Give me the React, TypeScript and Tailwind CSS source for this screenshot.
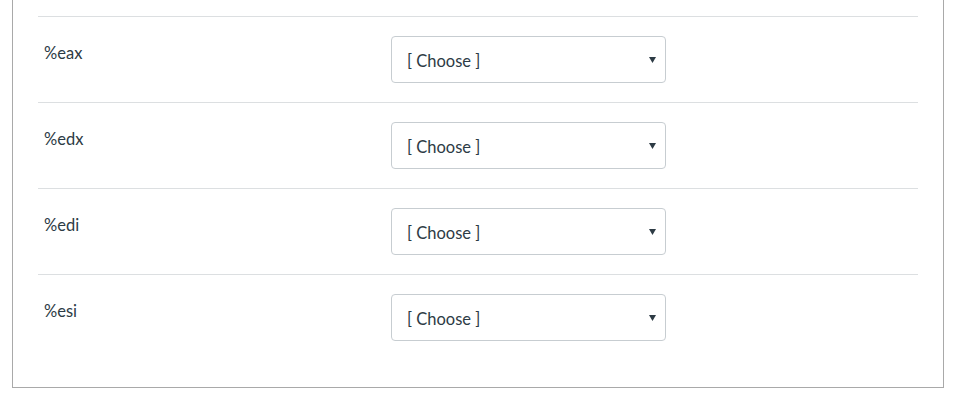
const registers = ["%eax", "%edx", "%edi", "%esi"]

function ChooseSelect() {
  return (
    <div className="w-[275px] h-[47px] rounded-[4px] border border-[#c7cdd1] bg-white flex items-center pl-[15px] pr-[9px]">
      <span className="flex-1 pt-[3px] text-[16.5px] text-[#2d3b45]">[ Choose ]</span>
      <svg width="7" height="6" viewBox="0 0 7 6" className="text-[#2d3b45]">
        <path d="M0 0h7L3.5 6z" fill="currentColor" />
      </svg>
    </div>
  )
}

export default function App() {
  return (
    <div className="bg-white w-[961px] h-[407px] pl-[12px] font-['Lato','Liberation_Sans',sans-serif] text-[#2d3b45]">
      <div className="w-[932px] border-x border-b border-[#a9a9a9] px-[25px] pt-[16px] pb-[27px]">
        {registers.map((reg) => (
          <div key={reg} className="flex border-t border-[#dcdfe1] py-[19px]">
            <div className="w-[353px] pl-[6px] pt-[5px] text-[16.5px] leading-[24px]">{reg}</div>
            <ChooseSelect />
          </div>
        ))}
      </div>
    </div>
  )
}
